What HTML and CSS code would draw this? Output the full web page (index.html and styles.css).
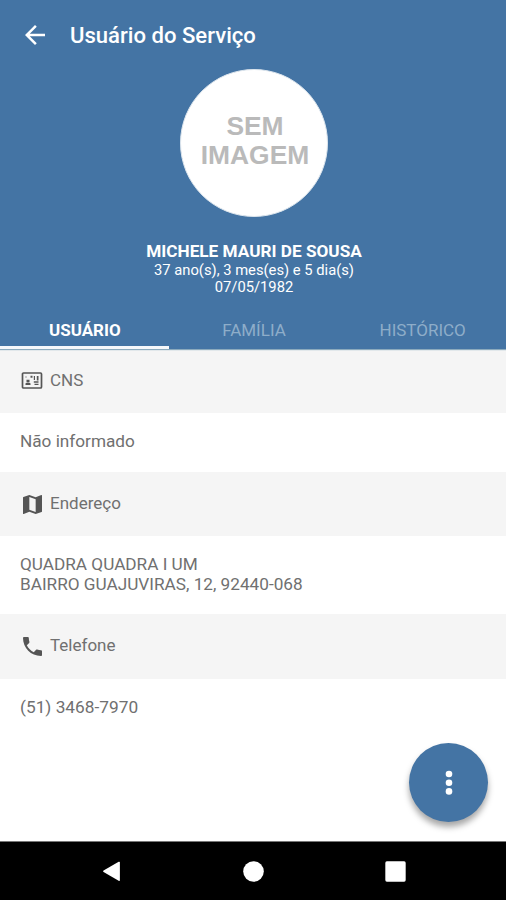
FILE: index.html
```html
<!DOCTYPE html>
<html lang="pt-BR">
<head>
<meta charset="utf-8">
<title>Usuário do Serviço</title>
<link rel="stylesheet" href="styles.css">
</head>
<body>
<div class="screen">
  <header class="header">
    <div class="toolbar">
      <svg class="back" viewBox="4 4 16 16"><path d="M20 11H7.83l5.59-5.59L12 4l-8 8 8 8 1.41-1.41L7.83 13H20z"/></svg>
      <h1 class="title">Usuário do Serviço</h1>
    </div>
    <div class="avatar">SEM<br>IMAGEM</div>
    <div class="name">MICHELE MAURI DE SOUSA</div>
    <div class="meta"><span class="age">37 ano(s), 3 mes(es) e 5 dia(s)</span><br><span class="birth">07/05/1982</span></div>
    <nav class="tabs">
      <span class="tab active">USUÁRIO</span>
      <span class="tab inactive">FAMÍLIA</span>
      <span class="tab inactive">HISTÓRICO</span>
    </nav>
  </header>
  <main class="content">
    <section>
      <h2 class="heading">
        <svg class="icon card" viewBox="0 0 21 17"><rect class="frame" x="1" y="1" width="19" height="15" rx="1"/><path d="M4 13v-1.600c1-1.200 4-1.200 5 0V13zM5 7.800h3v2.200H5zM4 4.500h1v1H4zM9 3.800h2v2H9zM12.300 4h1.200v4h-1.200zM15.300 4H17v4.500h-1.700zM12.300 9.300H17v1.400h-4.700zM13 11.700h4V13h-4z"/></svg>
        <span>CNS</span>
      </h2>
      <p class="value">Não informado</p>
    </section>
    <section>
      <h2 class="heading">
        <svg class="icon map" viewBox="3 3 18 18"><path d="M20.500 3l-.16.03L15 5.100 9 3 3.360 4.900c-.21.07-.36.25-.36.480V20.500c0 .28.22.5.5.5l.16-.03L9 18.900l6 2.100 5.640-1.900c.21-.07.36-.25.36-.48V3.500c0-.28-.22-.5-.5-.5zM15 19l-6-2.110V5l6 2.110V19z"/></svg>
        <span>Endereço</span>
      </h2>
      <p class="value address">QUADRA QUADRA I UM<br>BAIRRO GUAJUVIRAS, 12, 92440-068</p>
    </section>
    <section>
      <h2 class="heading tall">
        <svg class="icon phone" viewBox="3 3 18 18"><path d="M6.620 10.790c1.440 2.830 3.760 5.140 6.590 6.590l2.200-2.200c.27-.27.67-.36 1.020-.24 1.120.37 2.330.57 3.570.57.550 0 1 .45 1 1V20c0 .55-.45 1-1 1-9.390 0-17-7.610-17-17 0-.55.45-1 1-1h3.500c.55 0 1 .45 1 1 0 1.250.2 2.450.57 3.570.11.350.03.740-.25 1.020l-2.200 2.200z"/></svg>
        <span>Telefone</span>
      </h2>
      <p class="value phone-number">(51) 3468-7970</p>
    </section>
    <div class="fab"><svg viewBox="0 0 8 26"><circle cx="4" cy="4" r="3.300"/><circle cx="4" cy="12.700" r="3.300"/><circle cx="4" cy="21.400" r="3.300"/></svg></div>
  </main>
  <footer class="navbar">
    <svg viewBox="0 0 20 22"><path d="M1.700 10 17.500.9q1.300-.6 1.300.8v18.200q0 1.400-1.300.8L1.700 11.600q-1.200-.8 0-1.600z"/></svg>
    <svg viewBox="0 0 22 22"><circle cx="11" cy="11" r="10.800"/></svg>
    <svg viewBox="0 0 20 20"><rect x=".3" y=".3" width="19.400" height="19.400" rx="1.500"/></svg>
  </footer>
</div>
</body>
</html>
```

FILE: styles.css
```css
* { box-sizing: border-box; }
body { margin: 0; font-family: Roboto, "Liberation Sans", sans-serif; }
.screen { width: 506px; height: 900px; display: flex; flex-direction: column; background: #fff; }
.header { height: 349px; flex: none; display: flex; flex-direction: column; align-items: center; background: #4474a4; color: #fff; box-shadow: 0 1px 1px #8baabd; z-index: 1; }
.toolbar { width: 100%; height: 69px; display: flex; align-items: center; padding: 1px 0 0 25px; }
.back { width: 20px; height: 20px; fill: #fff; margin-right: 25px; }
.title { margin: 0; font-size: 22.100px; font-weight: 500; line-height: 30px; white-space: nowrap; }
.avatar { width: 148px; height: 148px; flex: none; margin-left: 2px; border-radius: 50%; background: #fff; border: 1px solid #dce5ed; display: flex; align-items: center; justify-content: center; text-align: center; padding-bottom: 4px; padding-left: 2px; font: bold 26.400px/29px "Liberation Sans", sans-serif; color: #bababa; }
.name { margin: 24px 0 0 2px; font-size: 17.200px; font-weight: 700; line-height: 21px; white-space: nowrap; }
.meta { margin-left: 2px; font-size: 14.750px; line-height: 17px; text-align: center; white-space: nowrap; }
.tabs { width: 100%; margin-top: auto; height: 37px; display: grid; grid-template-columns: repeat(3, 1fr); font-size: 17px; line-height: 36px; text-align: center; color: #8eadc9; }
.tab { display: block; height: 37px; }
.inactive { padding-left: 2px; }
.active { color: #fff; font-weight: 700; border-bottom: 3px solid #f5f8fb; padding-left: 1px; }
.content { flex: 1; position: relative; color: #707070; }
.heading { margin: 0; height: 64px; display: flex; align-items: center; background: #f5f5f5; padding: 0 0 2px 21px; font-size: 17px; font-weight: 400; }
.tall { height: 65px; padding-bottom: 3px; }
.icon { fill: #555; flex: none; }
.card { width: 22px; height: 17px; margin: 1px 7px 0 0; }
.frame { fill: none; stroke: #555; stroke-width: 1.700; }
.map, .phone { width: 19px; height: 19px; margin: 2px 8px 0 2px; }
.value { margin: 0; height: 59px; padding: 18px 20px; font-size: 17.200px; line-height: 20px; white-space: nowrap; }
.phone-number { font-size: 17.300px; }
.address { height: 78px; }
.fab { position: absolute; right: 18px; bottom: 19px; width: 79px; height: 79px; border-radius: 50%; background: #4474a4; box-shadow: 0 5px 6px rgba(0,0,0,.35); display: flex; align-items: center; justify-content: center; }
.fab svg { width: 8px; height: 26px; fill: #fff; }
.navbar { height: 59px; flex: none; background: #000; border-top: 1px solid #777; display: flex; justify-content: space-between; align-items: center; padding: 0 100px 0 101px; }
.navbar svg { width: 21px; height: 21px; fill: #fff; }
```
